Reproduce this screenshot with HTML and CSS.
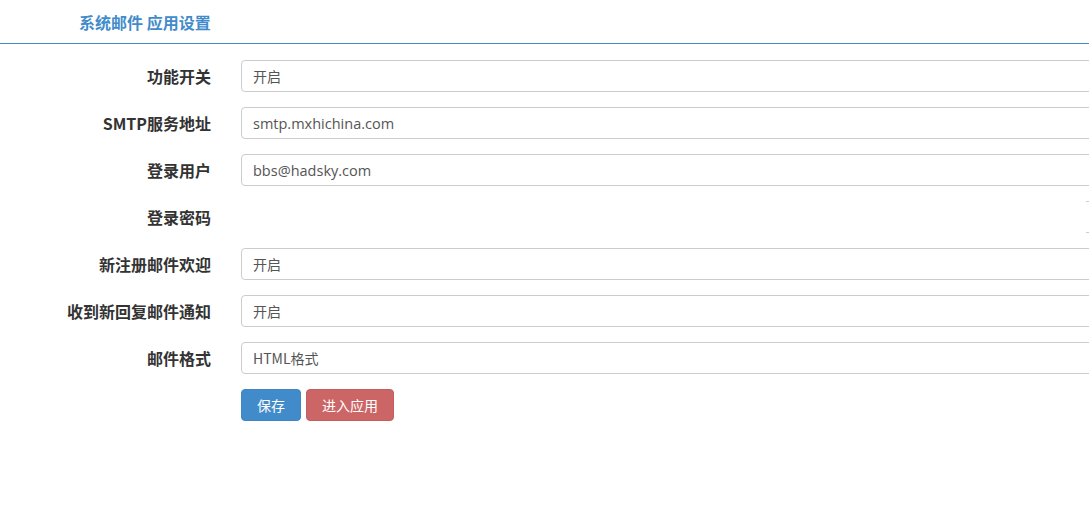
FILE: index.html
```html
<!DOCTYPE html>
<html lang="zh-CN">
<head>
<meta charset="utf-8">
<title>系统邮件 应用设置</title>
<link rel="stylesheet" href="styles.css">
</head>
<body>
<div class="page">
  <div class="header"><span class="title">系统邮件 应用设置</span></div>
  <form class="form">
    <div class="row">
      <label class="label">功能开关</label>
      <div class="field"><div class="control select">开启</div></div>
    </div>
    <div class="row">
      <label class="label">SMTP服务地址</label>
      <div class="field"><div class="control text">smtp.mxhichina.com</div></div>
    </div>
    <div class="row">
      <label class="label">登录用户</label>
      <div class="field"><div class="control text">bbs@hadsky.com</div></div>
    </div>
    <div class="row">
      <label class="label">登录密码</label>
      <div class="field"><div class="control pwd"></div></div>
    </div>
    <div class="row">
      <label class="label">新注册邮件欢迎</label>
      <div class="field"><div class="control select">开启</div></div>
    </div>
    <div class="row">
      <label class="label">收到新回复邮件通知</label>
      <div class="field"><div class="control select">开启</div></div>
    </div>
    <div class="row">
      <label class="label">邮件格式</label>
      <div class="field"><div class="control select">HTML格式</div></div>
    </div>
    <div class="row">
      <span class="label"></span>
      <div class="buttons">
        <button type="button" class="btn btn-primary">保存</button>
        <button type="button" class="btn btn-danger">进入应用</button>
      </div>
    </div>
  </form>
</div>
</body>
</html>
```
FILE: styles.css
```css
html, body {
  margin: 0;
  padding: 0;
  background: #fff;
  overflow: hidden;
}
body {
  font-family: "Noto Sans", "Noto Sans CJK SC", sans-serif;
  color: #333;
}
.page {
  width: 1089px;
}
.header {
  height: 43px;
  border-bottom: 1px solid #428bca;
  display: flex;
  align-items: center;
  padding-left: 79px;
}
.title {
  font-family: "Noto Sans CJK SC", sans-serif;
  font-size: 16px;
  font-weight: bold;
  color: #428bca;
  line-height: 1;
}
.form {
  padding-top: 16px;
  display: flex;
  flex-direction: column;
  gap: 15px;
}
.row {
  display: flex;
  align-items: center;
}
.label {
  padding-right: 30px;
  box-sizing: border-box;
  width: 241px;
  flex: 0 0 241px;
  text-align: right;
  font-family: "Noto Sans CJK SC", sans-serif;
  font-weight: bold;
  font-size: 16px;
  color: #333;
}
.field {
  flex: 1;
  display: flex;
  min-width: 0;
}
.control {
  height: 32px;
  box-sizing: border-box;
  border: 1px solid #ccc;
  border-radius: 4px;
  padding: 0 11px;
  display: flex;
  align-items: center;
  color: #555;
  width: 900px;
  flex: 0 0 900px;
  white-space: nowrap;
}
.control.select {
  font-size: 14px;
  font-family: "Noto Sans CJK SC", sans-serif;
}
.control.text {
  font-size: 14.5px;
  font-family: "Open Sans", "Noto Sans CJK SC", sans-serif;
}
.control.pwd {
  margin-left: 845px;
  border-left: none;
  border-radius: 0;
  width: 200px;
  flex-basis: 200px;
}
.buttons {
  display: flex;
  gap: 5px;
}
.btn {
  height: 32px;
  border: 1px solid transparent;
  border-radius: 4px;
  color: #fff;
  font-family: "Noto Sans CJK SC", sans-serif;
  font-size: 14px;
  padding: 0 15px;
  cursor: pointer;
}
.btn-primary {
  background: #428bca;
  border-color: #3f86c3;
  width: 60px;
}
.btn-danger {
  background: #cc6566;
  border-color: #c45d5e;
  width: 88px;
}
```
